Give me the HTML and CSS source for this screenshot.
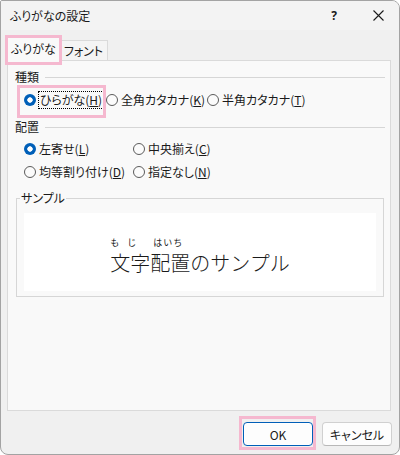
FILE: index.html
```html
<!DOCTYPE html>
<html lang="ja">
<head>
<meta charset="utf-8">
<title>ふりがなの設定</title>
<link rel="stylesheet" href="styles.css">
</head>
<body>
<div class="window">
  <div class="titlebar">
    <span class="title">ふりがなの設定</span>
    <span class="help">?</span>
    <span class="close"><svg width="11" height="11" viewBox="0 0 11 11"><path d="M0.5 0.5 L10.5 10.5 M10.5 0.5 L0.5 10.5" stroke="#1a1a1a" stroke-width="1.1" fill="none"/></svg></span>
  </div>
  <div class="body">
    <div class="tabs">
      <div class="tab active">ふりがな<span class="mark mark-tab"></span></div>
      <div class="tab">フォント</div>
    </div>
    <div class="panel">
      <div class="group-head"><span>種類</span><i class="rule"></i></div>
      <div class="options kind">
        <label class="opt"><span class="radio on"></span><span class="text focus">ひらがな(<u>H</u>)</span><span class="mark mark-radio"></span></label>
        <label class="opt"><span class="radio"></span><span class="text">全角カタカナ(<u>K</u>)</span></label>
        <label class="opt"><span class="radio"></span><span class="text">半角カタカナ(<u>T</u>)</span></label>
      </div>
      <div class="group-head second"><span>配置</span><i class="rule"></i></div>
      <div class="options align">
        <label class="opt"><span class="radio on"></span><span class="text">左寄せ(<u>L</u>)</span></label>
        <label class="opt"><span class="radio"></span><span class="text">中央揃え(<u>C</u>)</span></label>
        <label class="opt"><span class="radio"></span><span class="text">均等割り付け(<u>D</u>)</span></label>
        <label class="opt"><span class="radio"></span><span class="text">指定なし(<u>N</u>)</span></label>
      </div>
      <fieldset class="sample">
        <legend>サンプル</legend>
        <div class="preview">
          <p class="preview-text">
            <span class="rb"><span class="rt rt-moji">もじ</span><span class="base">文字</span></span><span class="rb"><span class="rt rt-haichi">はいち</span><span class="base">配置</span></span><span class="base">のサンプル</span>
          </p>
        </div>
      </fieldset>
    </div>
    <div class="buttons">
      <button class="btn primary">OK<span class="mark mark-ok"></span></button>
      <button class="btn">キャンセル</button>
    </div>
  </div>
</div>
</body>
</html>
```
FILE: styles.css
```css
* { box-sizing: border-box; }
html, body { margin: 0; padding: 0; background: #ffffff; }
body {
  font-family: "Noto Sans CJK JP", "Noto Sans", sans-serif;
  font-size: 12px;
  color: #1a1a1a;
}
.window {
  width: 400px;
  height: 455px;
  border: 1px solid #a3a3a3;
  border-radius: 2px 8px 8px 8px;
  background: #f0f0f0;
  overflow: hidden;
  display: flex;
  flex-direction: column;
}
.titlebar {
  height: 29px;
  flex: none;
  display: flex;
  align-items: center;
  background: #f3f3f3;
  font-feature-settings: "palt";
}
.title {
  padding-left: 9px;
  line-height: 14px;
}
.help {
  margin-left: auto;
  width: 46px;
  text-align: center;
  font-weight: bold;
  font-size: 12px;
  font-family: "Noto Sans", sans-serif;
}
.close {
  width: 42px;
  height: 29px;
  display: flex;
  align-items: center;
  justify-content: center;
}
.body {
  flex: 1;
  display: flex;
  flex-direction: column;
  padding: 7px 8px 0 6px;
  font-feature-settings: "palt";
}
.tabs {
  display: flex;
  align-items: flex-end;
  height: 23px;
}
.tab {
  height: 20px;
  width: 49px;
  margin-left: -1px;
  border: 1px solid #dadada;
  border-bottom: none;
  background: #f4f4f4;
  display: flex;
  align-items: center;
  justify-content: center;
  line-height: 14px;
}
.tab.active {
  position: relative;
  z-index: 1;
  margin-left: 0;
  width: 53px;
  height: 24px;
  margin-bottom: -1px;
  background: #f9f9f9;
  padding-bottom: 1px;
}
.mark {
  position: absolute;
  border: 3px solid #f5b8cf;
  pointer-events: none;
}
.mark-tab { left: -3px; top: -3px; right: -3px; bottom: -4px; }
.panel {
  height: 351px;
  flex: none;
  background: #f9f9f9;
  border: 1px solid #dadada;
  padding: 9px 5px 0 7px;
}
.group-head {
  display: flex;
  align-items: center;
  height: 14px;
  line-height: 14px;
}
.group-head.second { margin-top: 10px; }
.rule {
  flex: 1;
  height: 1px;
  background: #d6d6d6;
  margin-left: 6px;
}
.options {
  display: grid;
  padding-left: 9px;
}
.kind {
  margin-top: 6px;
  grid-template-columns: 82px 101px auto;
}
.align {
  margin-top: 5px;
  grid-template-columns: 109px auto;
  row-gap: 3px;
}
.opt {
  position: relative;
  display: flex;
  align-items: center;
  height: 20px;
  line-height: 14px;
}
.radio {
  width: 12px;
  height: 12px;
  border-radius: 50%;
  border: 1px solid #5b5b5b;
  background: #fbfbfb;
  margin-right: 3px;
  flex: none;
}
.radio.on {
  border: none;
  background: radial-gradient(circle, #ffffff 0 2.4px, #005fb8 3px);
}
.text u { text-decoration: underline; text-underline-offset: 1px; }
.text.focus {
  border: 1px dotted #000;
  padding: 1px 1px;
  margin-left: -1px;
}
.mark-radio { left: -7px; top: -5px; width: 89px; height: 33px; }
.sample {
  margin: 9px 1px 0 1px;
  padding: 0 7px 5px 7px;
  border: 1px solid #d6d6d6;
  min-width: 0;
}
.sample legend {
  padding: 0 1px;
  margin-left: -4px;
  line-height: 14px;
}
.preview {
  margin-top: 8px;
  height: 78px;
  background: #ffffff;
  display: flex;
  align-items: flex-start;
  justify-content: center;
}
.preview-text {
  margin: 0;
  padding-top: 24px;
  display: flex;
  align-items: flex-end;
  font-size: 20px;
  font-weight: 300;
  font-feature-settings: normal;
  color: #1a1a1a;
}
.rb {
  display: flex;
  flex-direction: column;
  align-items: flex-start;
}
.rt {
  font-size: 9px;
  line-height: 12px;
  margin-bottom: 2px;
  font-weight: 400;
}
.rt-moji { letter-spacing: 8px; }
.rt-haichi { letter-spacing: 1px; padding-left: 3px; }
.base {
  line-height: 24px;
  white-space: nowrap;
}
.buttons {
  display: flex;
  justify-content: flex-end;
  gap: 9px;
  padding: 11px 0 0 0;
  margin-right: -1px;
}
.btn {
  position: relative;
  width: 70px;
  height: 24px;
  border: 1px solid #d0d0d0;
  border-bottom-color: #b8b8b8;
  border-radius: 4px;
  background: #fdfdfd;
  font-family: "Noto Sans CJK JP", "Noto Sans", sans-serif;
  font-size: 12px;
  color: #1a1a1a;
  padding: 0;
  font-feature-settings: "palt";
}
.btn.primary {
  border: 1px solid #005fb8;
  box-shadow: inset 0 0 0 1px #ffffff;
}
.mark-ok { left: -5px; top: -7px; right: -4px; bottom: -5px; }
```
